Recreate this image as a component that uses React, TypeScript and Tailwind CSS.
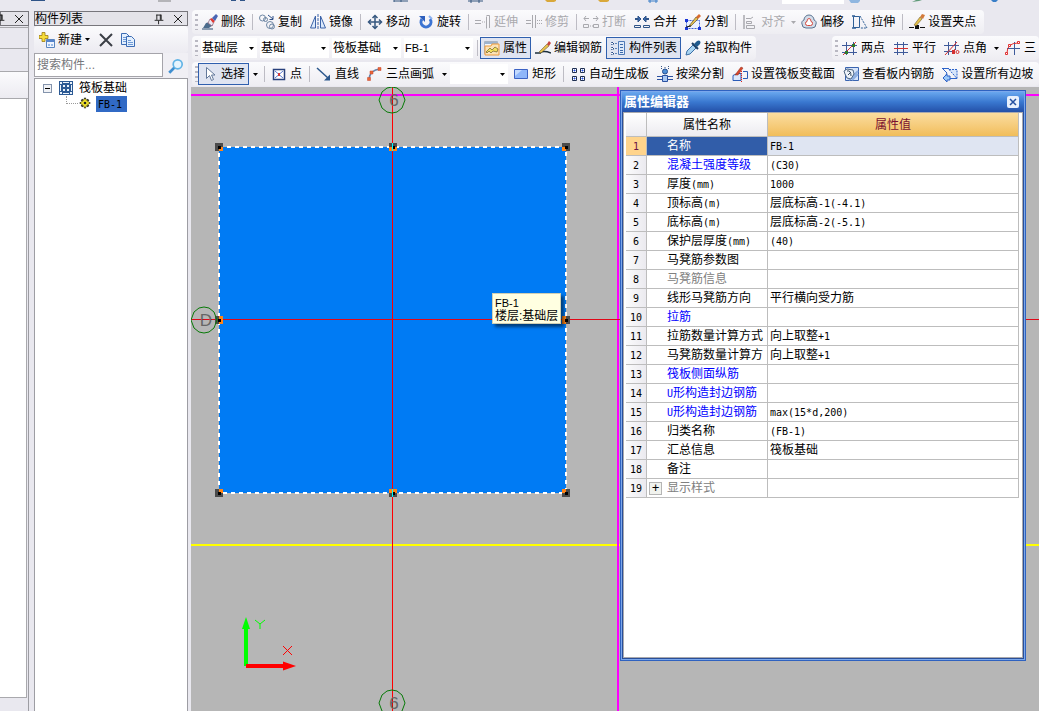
import type { ReactNode } from 'react';
import clsx from 'clsx';

const DRAWINGS = {
	erase: (
		<>
			<path d="M1 14h6l4-3-3-3-4 1z" fill="#4c6b8c" />
			<path d="M0 15h11" stroke="#27486e" />
			<path d="M6 9l2-4 4 3-2 4z" fill="#e8e8f4" stroke="#8a5a70" strokeWidth=".7" />
			<path d="M8 5l2-1 3 3-2 2z" fill="#e03a34" />
			<path d="M10 4l4-4 2 2-3 5z" fill="#4a66b4" />
		</>
	),
	copy: (
		<g fill="none" stroke="#6d86a3">
			<circle cx="3.5" cy="4" r="3" />
			<circle cx="6.5" cy="5.5" r="2" />
			<circle cx="11" cy="11" r="3.5" />
			<circle cx="13" cy="12.500" r="2.500" />
			<path d="M9 1l5 4M14 2v3.500h-3.500" stroke="#2c4f88" />
		</g>
	),
	mirror: (
		<g fill="#dce9fb" stroke="#3c63a8">
			<path d="M5.500 2v12h-5z" />
			<path d="M10.500 2v12h5z" />
			<path d="M8 0v16" strokeDasharray="3 1" />
		</g>
	),
	move: (
		<g fill="none" stroke="#35577f" strokeWidth="1.500">
			<path d="M8 2v12M2 8h12" />
			<path d="M5.500 4L8 1.500 10.500 4M5.500 12L8 14.500 10.500 12M4 5.500L1.500 8 4 10.500M12 5.500L14.500 8 12 10.500" />
		</g>
	),
	rotate: (
		<>
			<path d="M4 5a5 5 0 1 0 8 0" fill="none" stroke="#3c74d2" strokeWidth="3" />
			<path d="M1 2h6v6z" fill="#2d5fbd" />
			<path d="M11 2l3 3" stroke="#8cb2f0" strokeWidth="2" />
		</>
	),
	extend: (
		<g fill="none" stroke="#a9a9ae">
			<path d="M0 6.500h6M0 9.500h6" />
			<path d="M7 8h4" strokeDasharray="1 1" />
			<path d="M11.500 2.500v12M14.500 14V1.500h-3" />
		</g>
	),
	trim: (
		<g fill="none" stroke="#a9a9ae">
			<path d="M0 6.500h5M0 9.500h5" />
			<path d="M6.500 1v13M9.500 1v13" />
			<path d="M11 6.500h5M11 9.500h5" strokeDasharray="1 1" />
		</g>
	),
	breakAt: (
		<g fill="none" stroke="#a9a9ae">
			<path d="M1 4.500h5M10 4.500h5M3 2L1 4.500 3 7M13 2l2 2.500L13 7" />
			<path d="M.5 10.500h5v3h-5zM10.500 10.500h5v3h-5z" />
			<path d="M7 12h3" strokeDasharray="1 1" />
		</g>
	),
	merge: (
		<g fill="none" stroke="#2f5488">
			<path d="M1 5h5M10 5h5" strokeWidth="2" />
			<path d="M4 2l3 3-3 3zM12 2L9 5l3 3z" fill="#3d6bb0" />
			<path d="M.5 11.500h6v2h-6zM9.500 11.500h6v2h-6z" />
		</g>
	),
	split: (
		<>
			<path d="M1.500 6.500h13v8h-13z" fill="#eaf1ff" stroke="#3b5fd0" strokeDasharray="2 1" />
			<path d="M0 5h3v3H0zM0 13h3v3H0zM13 13h3v3h-3z" fill="#1a36d8" />
			<path d="M4 12L11 3l2 2-7 7z" fill="#e2c04e" stroke="#4a3c28" strokeWidth=".6" />
			<path d="M11 3l3-3 2 2-3 3z" fill="#d86b2c" />
			<path d="M1 13l5-1" stroke="#111" />
		</>
	),
	align: (
		<g fill="none" stroke="#a9a9ae">
			<path d="M2 1v14" strokeWidth="1.500" />
			<path d="M4 4.500h4M4.500 7.500h5v2h-5zM4.500 11.500h8v3h-8z" />
			<path d="M8 5l3-2" />
		</g>
	),
	offset: (
		<>
			<path d="M1 10a3 3 0 0 1 2-4 5 5 0 0 1 10 0 3 3 0 0 1 2 4q0 4-4 4H5q-4 0-4-4z" fill="#d4dde9" stroke="#5b7592" />
			<path d="M4.500 9.500q0-2 1.500-2 0-3 2-3t2 3q1.500 0 1.500 2 0 2-2 2h-3q-2 0-2-2z" fill="#fff" stroke="#d34a40" />
		</>
	),
	stretch: (
		<g fill="none" stroke="#2f5f96">
			<path d="M1.500 2.500h6v11h-6z" />
			<path d="M8 2l7 12H8" strokeDasharray="2 1" />
			<path d="M0 2h3M0 14h4" strokeWidth="1.500" />
		</g>
	),
	grip: (
		<>
			<path d="M0 13.500h5M11 13.500h5" stroke="#111" />
			<path d="M6 11h4v4H6z" fill="#111" />
			<path d="M5 11l6-8 2 2-6 7z" fill="#e4c04a" stroke="#5c4a24" strokeWidth=".5" />
			<path d="M11 3l2-3 3 1-2 4z" fill="#d37a3a" />
		</>
	),
	property: (
		<>
			<path d="M.5 1.500h13v12H.5z" fill="#f6f8fc" stroke="#a9b4c4" />
			<path d="M1 2h12v2H1z" fill="#9cb3cf" />
			<path d="M1 6h6l1-2h7v11H1z" fill="#fbe3b8" stroke="#ee9a3a" />
			<path d="M2 12l4-4 2 2 3-3 3 2-1 3-4-1-2 2-2-2-2 2z" fill="#f3e05a" stroke="#57481c" strokeWidth=".6" />
		</>
	),
	pencil: (
		<>
			<path d="M0 13h6M5 13q3-3 11 0" fill="none" stroke="#1c2f3c" strokeWidth="1.500" />
			<path d="M4 12l8-8 2 2-8 7z" fill="#e6c04c" stroke="#5c4a24" strokeWidth=".5" />
			<path d="M12 4l2-3 2 2-2 3z" fill="#c8453c" />
		</>
	),
	list: (
		<>
			<path d="M1.500 2.500h2v2h-2zM1.500 7.500h2v2h-2zM1.500 12.500h2v2h-2z" fill="#fff" stroke="#2a4f8a" strokeDasharray="1.500 1" />
			<path d="M5 3.500h2M5 8.500h2M5 13.500h2" stroke="#5d84b8" />
			<path d="M8.500 1.500h6v13h-6z" fill="#dfeafa" stroke="#4f7ab8" />
			<path d="M10 4.500h3M10 7.500h3M10 10.500h3M10 12.500h3" stroke="#3c69a8" />
		</>
	),
	dropper: (
		<>
			<path d="M1 15l1-4 6-6 3 3-6 6z" fill="#a9d4f2" stroke="#3a6ea5" />
			<path d="M7 3l6 6" stroke="#1c3f66" strokeWidth="2" />
			<path d="M9 4l3-3q2-1 3 0t0 3l-3 3z" fill="#1f5a8e" />
		</>
	),
	twoPoint: (
		<>
			<path d="M4.500 2v13M11.500 2v13M0 5.500h15M0 12.500h15" stroke="#3e5a9a" />
			<path d="M1 15L14 2" stroke="#d43030" />
			<path d="M3 11h3v3H3zM10 4h3v3h-3z" fill="#2f7a2a" />
		</>
	),
	parallel: (
		<>
			<path d="M4.500 2v13M10.500 2v13" stroke="#3e5a9a" />
			<path d="M1 4.500h14M1 12.500h14" stroke="#3e5a9a" />
			<path d="M1 8.500h14" stroke="#d43030" />
		</>
	),
	pointAngle: (
		<>
			<path d="M4.500 2v13M11.500 1v9M0 5.500h15M0 11.500h8" stroke="#3e5a9a" />
			<path d="M1 15L13 2M9 12l2-3" stroke="#d43030" />
			<circle cx="13.500" cy="12" r="1.500" fill="none" stroke="#d43030" />
			<path d="M8 10h3v4H8z" fill="#d43030" />
		</>
	),
	threePoint: (
		<>
			<path d="M9.500 2v13M2 8.500h13" stroke="#3e5a9a" />
			<path d="M2 13Q2 3 13 3" fill="none" stroke="#e03030" />
			<path d="M.5 12.500h2v2h-2zM3.500 4.500h2v2h-2zM12.500 1.500h2v2h-2z" fill="#fff" stroke="#e03030" />
		</>
	),
	cursor: <path d="M4.500 1.500v11l3-3 2 5 2-1-2-4.500h3.500z" fill="#fff" stroke="#62789a" />,
	point: (
		<>
			<path d="M2.500 3.500h11v10h-11z" fill="#fff" stroke="#28407c" strokeWidth="1.500" />
			<path d="M4 5l8 7M12 5l-8 7" stroke="#5c7ad0" />
			<path d="M7 7h2v3H7z" fill="#d23a3a" />
		</>
	),
	line: (
		<>
			<path d="M1 2l11 10" stroke="#2b578c" strokeWidth="1.500" />
			<path d="M14 14.500H8l6-6z" fill="#2b578c" />
		</>
	),
	arc: (
		<>
			<path d="M2 13Q3 4 13 3" fill="none" stroke="#6885ac" strokeWidth="1.500" />
			<path d="M.5 11.500h3v3h-3zM3 5h3v3H3zM11 1.500h3v3h-3z" fill="#e9673a" stroke="#c8452a" strokeWidth=".5" />
		</>
	),
	rect: (
		<>
			<path d="M1.500 3.500h13v9h-13z" fill="#8fb6fa" stroke="#3c62c4" />
			<path d="M2 4h7l-7 6z" fill="#c3dafe" />
		</>
	),
	autoSlab: (
		<g stroke="#1e2e50">
			<path d="M2.500 2.500h4v4h-4zM10.500 2.500h4v4h-4zM2.500 10.500h4v4h-4zM10.500 10.500h4v4h-4z" fill="#fff" />
			<path d="M4 4h1v1H4zM12 4h1v1h-1zM4 12h1v1H4zM12 12h1v1h-1z" fill="#2450e0" stroke="#2450e0" />
		</g>
	),
	beamSplit: (
		<>
			<path d="M4.500 0v3M11.500 0v3M8 1v2" stroke="#3a5686" strokeDasharray="1 1" />
			<circle cx="8" cy="5.500" r="2.500" fill="#4e8ed8" stroke="#244c8c" />
			<path d="M0 10.500h5M11 10.500h5M0 13.500h5M11 13.500h5" stroke="#2b50a0" />
			<path d="M5.500 9.500h5v6h-5z" fill="#a8c8f4" stroke="#2b50a0" />
		</>
	),
	section: (
		<>
			<path d="M1 14.500v-5l4-2h4v7z" fill="#dbe7fb" stroke="#2b5cb8" />
			<path d="M11 5.500h4.500v7H11" fill="none" stroke="#2b5cb8" />
			<path d="M9.500 5v11" stroke="#d22" strokeDasharray="1 1" />
			<path d="M3 9l6-8 2 1-5 7z" fill="#d9472c" stroke="#8c2c18" strokeWidth=".5" />
		</>
	),
	inspect: (
		<>
			<path d="M2.500 1.500h13v13h-13z" fill="#d6e4fa" stroke="#3a64b0" />
			<path d="M6 14L15 5M9 14l6-6" stroke="#8daee0" strokeWidth="2" />
			<path d="M1 5l3-2 6 1 1 4-3 5-4-1-2-4z" fill="#eef3fa" stroke="#4d6684" />
			<path d="M4 5q4-1 4 5M5 9l3-3" fill="none" stroke="#34495e" />
		</>
	),
	slope: (
		<g fill="none" stroke="#2c62c8">
			<path d="M7 3.500h8v9L7 3.500" fill="#d6e5fb" strokeDasharray="2 1" />
			<path d="M0 2.500h7M1 3l4 4-2 4M3 12.500h12" />
			<path d="M1 12l4-4v2h3v4H5v2z" fill="#9cc8f8" />
		</g>
	),
	create: (
		<>
			<path d="M7.500 7.500h8v8h-8z" fill="#eef5ff" stroke="#5a86c0" />
			<path d="M8 8h7v2H8z" fill="#5584cc" />
			<path d="M9 12h2v2H9zM12 12h2v2h-2z" fill="#9dbce8" />
			<path d="M3 .5h3v3h3v3H6v3H3v-3H0v-3h3z" fill="#f7dc3a" stroke="#9c7c14" strokeWidth=".8" />
		</>
	),
	duplicate: (
		<g fill="#e3effd" stroke="#3c6cb4">
			<path d="M1.500 1.500h5l3 3v8h-8z" />
			<path d="M6.500 4.500h5l3 3v7h-8z" />
			<path d="M3 5.500h3M3 7.500h3M3 9.500h3M8 8.500h3M8 10.500h5M8 12.500h5" stroke="#6f9bd8" />
		</g>
	),
	search: (
		<>
			<path d="M2 14l5-5" stroke="#3f8fd0" strokeWidth="2.500" />
			<circle cx="9.500" cy="6.500" r="4" fill="#e6f4fd" stroke="#62b4e6" strokeWidth="1.500" />
		</>
	),
	raft: (
		<>
			<path d="M1 1h14v14H1z" fill="#2c5a94" />
			<path d="M2 2h2v2H2zM5 2h6v1H5zM12 2h2v2h-2zM2 5h1v6H2zM13 5h1v6h-1zM2 12h2v2H2zM5 13h6v1H5zM12 12h2v2h-2zM5 5h2v2H5zM9 5h2v2H9zM5 9h2v2H5zM9 9h2v2H9z" fill="#eaf2fb" />
		</>
	),
	gear: (
		<>
			<path d="M8 2v12M2 8h12M4 4l8 8M12 4l-8 8" stroke="#222" strokeWidth="2.500" />
			<circle cx="8" cy="8" r="4" fill="#f4e62c" stroke="#4a4410" />
			<path d="M8 3v10M3 8h10" stroke="#f4e62c" strokeWidth="1.500" />
			<circle cx="8" cy="8" r="1.500" fill="#222" />
		</>
	),
	pin: <path d="M5.500 3v6M9.500 3v6M10.500 3v6M5 3.500h5M3 9.500h10M7.500 10v4" stroke="#111" fill="none" />,
	cross: <path d="M4 4l8 8M12 4l-8 8" stroke="#222" />,
	remove: <path d="M2 2l12 12M14 2L2 14" stroke="#3b3f46" strokeWidth="2" />
};

type IconName = keyof typeof DRAWINGS;

function Icon({ name, className = 'size-4' }: { name: IconName; className?: string }) {
	return (
		<svg viewBox="0 0 16 16" aria-hidden className={clsx('shrink-0', className)}>
			{DRAWINGS[name]}
		</svg>
	);
}

function Caret({ className }: { className?: string }) {
	return (
		<svg viewBox="0 0 5 3" aria-hidden className={clsx('h-[3px] w-[5px] shrink-0', className)}>
			<path d="M0 0h5L2.500 3z" fill="currentColor" />
		</svg>
	);
}

// Latin runs are set in half-width cells next to full-width Chinese characters
function Mixed({ text }: { text: string }) {
	return (
		<>
			{text.split(/([\x20-\x7e]+)/).map((part, index) =>
				index % 2 ? (
					<span key={index} className="font-['DejaVu_Sans_Mono',monospace] text-[10px]">
						{part}
					</span>
				) : (
					part
				)
			)}
		</>
	);
}

interface IToolProps {
	icon: IconName;
	label: string;
	active?: boolean;
	disabled?: boolean;
}

function Tool({ icon, label, active, disabled }: IToolProps) {
	return (
		<button
			type="button"
			disabled={disabled}
			className={clsx(
				'flex h-[22px] shrink-0 items-center gap-[3px] border px-[3px] whitespace-nowrap',
				active ? 'border-[#2f5fae] bg-[#dfe4f1]' : 'border-transparent',
				disabled && 'text-[#a9a9ad]'
			)}
		>
			<Icon name={icon} />
			{label}
		</button>
	);
}

function Menu({ label, disabled, className = 'w-3' }: { label: string; disabled?: boolean; className?: string }) {
	return (
		<button
			type="button"
			aria-label={label}
			disabled={disabled}
			className={clsx('flex h-5 shrink-0 items-center justify-center', disabled && 'text-[#a9a9ad]', className)}
		>
			<Caret />
		</button>
	);
}

function Separator() {
	return <span className="mr-0.5 ml-[3px] h-4 w-px shrink-0 bg-[#bdbcc4]" />;
}

function Combo({ label, value, className }: { label: string; value: string; className: string }) {
	return (
		<span className={clsx('grid h-5 shrink-0 items-center bg-white', className)}>
			<select aria-label={label} className="col-start-1 row-start-1 h-5 w-full appearance-none pl-px">
				<option>{value}</option>
			</select>
			<Caret className="pointer-events-none col-start-1 row-start-1 mr-[3px] justify-self-end" />
		</span>
	);
}

function Toolbar({ children, className }: { children: ReactNode; className?: string }) {
	return (
		<div
			className={clsx(
				'flex h-6 items-center rounded-sm bg-linear-to-b from-[#fbfbfd] to-[#eeedf2] pl-[3px]',
				className
			)}
		>
			<span className="h-4 w-[3px] shrink-0 bg-[repeating-linear-gradient(to_bottom,#b9b8c2_0_2px,transparent_2px_5px)]" />
			{children}
		</div>
	);
}

function Toolbars() {
	return (
		<div className="flex shrink-0 flex-col gap-0.5 overflow-hidden pb-px pl-px">
			<div className="flex">
				<Toolbar className="shrink-0 pr-1">
					<Tool icon="erase" label="删除" />
					<Separator />
					<Tool icon="copy" label="复制" />
					<Tool icon="mirror" label="镜像" />
					<Separator />
					<Tool icon="move" label="移动" />
					<Tool icon="rotate" label="旋转" />
					<Separator />
					<Tool icon="extend" label="延伸" disabled />
					<Tool icon="trim" label="修剪" disabled />
					<Separator />
					<Tool icon="breakAt" label="打断" disabled />
					<Tool icon="merge" label="合并" />
					<Tool icon="split" label="分割" />
					<Separator />
					<Tool icon="align" label="对齐" disabled />
					<Menu label="对齐选项" disabled className="w-2" />
					<Tool icon="offset" label="偏移" />
					<Tool icon="stretch" label="拉伸" />
					<Separator />
					<Tool icon="grip" label="设置夹点" />
				</Toolbar>
			</div>
			<div className="flex">
				<Toolbar className="shrink-0">
					<span className="mr-px ml-[3px] flex gap-[3px]">
						<Combo label="楼层" value="基础层" className="w-14" />
						<Combo label="构件类别" value="基础" className="w-[69px]" />
						<Combo label="构件类型" value="筏板基础" className="w-[69px]" />
						<Combo label="构件" value="FB-1" className="w-[69px] text-[11px]" />
					</span>
					<Separator />
					<Tool icon="property" label="属性" active />
					<Tool icon="pencil" label="编辑钢筋" />
					<Tool icon="list" label="构件列表" active />
					<Tool icon="dropper" label="拾取构件" />
				</Toolbar>
				<Toolbar className="ml-[76px] min-w-0 grow overflow-hidden">
					<Tool icon="twoPoint" label="两点" />
					<Tool icon="parallel" label="平行" />
					<Tool icon="pointAngle" label="点角" />
					<Menu label="点角选项" className="w-[10px]" />
					<Tool icon="threePoint" label="三" />
				</Toolbar>
			</div>
			<Toolbar>
				<Tool icon="cursor" label="选择" active />
				<Menu label="选择选项" />
				<Separator />
				<Tool icon="point" label="点" />
				<Separator />
				<Tool icon="line" label="直线" />
				<Tool icon="arc" label="三点画弧" />
				<Menu label="画弧选项" />
				<Combo label="画法" value="" className="mr-px w-[58px]" />
				<Tool icon="rect" label="矩形" />
				<Separator />
				<Tool icon="autoSlab" label="自动生成板" />
				<Tool icon="beamSplit" label="按梁分割" />
				<Tool icon="section" label="设置筏板变截面" />
				<Tool icon="inspect" label="查看板内钢筋" />
				<Tool icon="slope" label="设置所有边坡" />
			</Toolbar>
		</div>
	);
}

// Lower edges of the icons of the toolbar that is scrolled off the top
function CutOffToolbar() {
	return (
		<svg aria-hidden className="h-[11px] w-full shrink-0">
			<path d="M782 0h62v4h-62z" fill="#fff" />
			<path d="M31 0h14v1H31zM231 0h5v1h-5zM240 0h5v1h-5z" fill="#2f5488" />
			<path d="M158 0h13v2h-13z" fill="#b4b4b8" />
			<path d="M394 1h14M394 0v2M401 0v2M468 1h15M471 0v3M479 0v3" stroke="#35577f" />
			<path d="M545 0h11v1l-2 1h-7zM598 0h11v1l-2 1h-7z" fill="#d9a83a" />
			<path d="M648 1h10M650 0v3M656 0v3" stroke="#3a7fc8" />
			<path d="M849 0h11v1l-2 2h-7z" fill="#8fb6e0" />
			<path d="M912 2l4-2h6l-3 1z" fill="#5f9a78" />
			<path d="M991 0h7l-2 2h-3z" fill="#3a7fc8" />
		</svg>
	);
}

function DockHeader({ title }: { title?: string }) {
	return (
		<div className="flex h-[15px] shrink-0 items-center justify-end border border-[#77767c] bg-[#e4e3e9]">
			{title && <h2 className="mr-auto whitespace-nowrap">{title}</h2>}
			<button type="button" aria-label="固定" className="mr-1 shrink-0">
				<Icon name="pin" className="size-[14px]" />
			</button>
			<button type="button" aria-label="关闭" className="mr-px shrink-0">
				<Icon name="cross" className="size-4" />
			</button>
		</div>
	);
}

function ComponentList() {
	return (
		<aside className="flex w-[154px] shrink-0 flex-col">
			<DockHeader title="构件列表" />
			<div className="flex h-[27px] shrink-0 items-center rounded-sm bg-linear-to-b from-[#fbfbfd] to-[#ecebf1] pl-[5px]">
				<button type="button" className="flex items-center gap-[3px]">
					<Icon name="create" />
					新建
					<Caret />
				</button>
				<button type="button" aria-label="删除" className="ml-2">
					<Icon name="remove" />
				</button>
				<button type="button" aria-label="复制" className="ml-1.5">
					<Icon name="duplicate" />
				</button>
			</div>
			<div className="flex h-[25px] shrink-0 bg-[#f0eff4]">
				<input
					type="text"
					aria-label="搜索构件"
					placeholder="搜索构件..."
					className="h-6 w-[129px] border border-[#a5a4aa] bg-white px-0.5 placeholder:text-[#77777b]"
				/>
				<button type="button" aria-label="搜索" className="flex grow items-center justify-center">
					<Icon name="search" className="size-[18px]" />
				</button>
			</div>
			<ul className="grow border border-b-0 border-[#9d9da3] bg-white pt-px pl-2">
				<li>
					<div className="flex h-4 items-center">
						<button
							type="button"
							aria-label="折叠"
							className="flex size-[9px] items-center justify-center border border-[#8494ac] bg-[#f0f2f6]"
						>
							<span className="h-px w-[5px] bg-black" />
						</button>
						<Icon name="raft" className="ml-1.5 size-4" />
						<span className="ml-[5px]">筏板基础</span>
					</div>
					<ul className="pl-[23px]">
						<li className="flex h-4 items-start">
							<span className="h-2 w-3 shrink-0 border-b border-l border-dotted border-[#9a9a9a]" />
							<Icon name="gear" className="size-[14px]" />
							<span className="ml-1 h-4 w-[31px] bg-[#316ac5] pl-0.5 leading-4">
								<Mixed text="FB-1" />
							</span>
						</li>
					</ul>
				</li>
			</ul>
		</aside>
	);
}

function AxisBubble({ x, y, label }: { x: number; y: number; label: string }) {
	return (
		<>
			<path
				d="M0-13L5-12 10-8 13 0 10 8 5 12 0 13-5 12-10 8-13 0-10-8-5-12z"
				transform={`translate(${x} ${y})`}
				fill="none"
				stroke="#087a08"
			/>
			<text x={x + 2} y={y + 6} textAnchor="middle" fill="#666" className="font-['Liberation_Sans',sans-serif] text-[17px]">
				{label}
			</text>
		</>
	);
}

// Slab corners and edge midpoints, dx/dy pointing to the inside
const HANDLES = [
	{ x: 28, y: 60, dx: 1, dy: 1 },
	{ x: 202, y: 60, dx: 0, dy: 1 },
	{ x: 375, y: 60, dx: -1, dy: 1 },
	{ x: 28, y: 233, dx: 1, dy: 0 },
	{ x: 375, y: 233, dx: -1, dy: 0 },
	{ x: 28, y: 406, dx: 1, dy: -1 },
	{ x: 202, y: 406, dx: 0, dy: -1 },
	{ x: 375, y: 406, dx: -1, dy: -1 }
];

function Drawing() {
	return (
		<svg role="img" aria-label="筏板平面图" className="absolute inset-0 size-full">
			<rect x="28" y="60" width="347" height="346" fill="#007bf4" />
			<path d="M0 458h848" stroke="#ff0" strokeWidth="2" />
			<path d="M0 8h848M427 0v624" stroke="#f0f" strokeWidth="2" />
			<path d="M0 232.500h848" stroke="#e00818" />
			<path d="M201.500 0v624" stroke="#f00" />
			<rect x="28" y="60" width="347" height="346" fill="none" stroke="#fff" strokeWidth="2" strokeDasharray="4 4" />
			{HANDLES.map(({ x, y, dx, dy }) => (
				<g key={`${x}-${y}`} transform={`translate(${x} ${y})`}>
					<rect x="-4" y="-4" width="8" height="8" fill="#4b4b4b" />
					<rect x={dx < 0 ? -4 : 0} y={dy < 0 ? -4 : 0} width="4" height="4" fill="#ff8416" />
					{dx === 0 && <rect x="-4" y={dy < 0 ? -4 : 0} width="8" height="4" fill="#ff8416" />}
					{dy === 0 && <rect x={dx < 0 ? -4 : 0} y="-4" width="4" height="8" fill="#ff8416" />}
					<rect x="-1" y="-1" width="3" height="3" fill="#000" />
					{dx === 0 && <path d="M-.5-4v8" stroke="#0ff" />}
				</g>
			))}
			<AxisBubble x={201} y={13} label="6" />
			<AxisBubble x={13} y={233} label="D" />
			<AxisBubble x={201} y={616} label="6" />
			<path d="M55 579v-42" stroke="#0f0" strokeWidth="4" />
			<path d="M51 542l4-12 4 12z" fill="#0f0" />
			<path d="M55 579h40" stroke="#f00" strokeWidth="4" />
			<path d="M92 574.500l13 4.500-13 4.500z" fill="#f00" />
			<path d="M64 533l5 4 5-4M69 537v5" fill="none" stroke="#0f0" />
			<path d="M92 559l9 9M101 559l-9 9" stroke="#f00" />
		</svg>
	);
}

interface IProperty {
	name: string;
	value?: string;
	tone?: 'link' | 'muted';
	expandable?: boolean;
}

const PROPERTIES: IProperty[] = [
	{ name: '名称', value: 'FB-1' },
	{ name: '混凝土强度等级', value: '(C30)', tone: 'link' },
	{ name: '厚度(mm)', value: '1000' },
	{ name: '顶标高(m)', value: '层底标高-1(-4.1)' },
	{ name: '底标高(m)', value: '层底标高-2(-5.1)' },
	{ name: '保护层厚度(mm)', value: '(40)' },
	{ name: '马凳筋参数图' },
	{ name: '马凳筋信息', tone: 'muted' },
	{ name: '线形马凳筋方向', value: '平行横向受力筋' },
	{ name: '拉筋', tone: 'link' },
	{ name: '拉筋数量计算方式', value: '向上取整+1' },
	{ name: '马凳筋数量计算方', value: '向上取整+1' },
	{ name: '筏板侧面纵筋', tone: 'link' },
	{ name: 'U形构造封边钢筋', tone: 'link' },
	{ name: 'U形构造封边钢筋', value: 'max(15*d,200)', tone: 'link' },
	{ name: '归类名称', value: '(FB-1)' },
	{ name: '汇总信息', value: '筏板基础' },
	{ name: '备注' },
	{ name: '显示样式', tone: 'muted', expandable: true }
];

function PropertyRow({ property, index }: { property: IProperty; index: number }) {
	const selected = index === 0;
	const { name, value, tone, expandable } = property;
	return (
		<tr className="h-[19px]">
			<th
				scope="row"
				className={clsx(
					'border-r border-b border-[#bdbdbd] p-0 font-normal',
					selected ? 'bg-[#ffd48c] text-[#6a1545]' : 'bg-linear-to-r from-[#fbfbfc] to-[#ebeaef]'
				)}
			>
				<Mixed text={String(index + 1)} />
			</th>
			<td
				className={clsx(
					'border-r border-b border-[#bdbdbd] p-0',
					selected && 'bg-[#315da9] text-white',
					tone === 'link' && 'text-[#00f]',
					tone === 'muted' && 'text-[#808080]'
				)}
			>
				<div className="flex h-[18px] items-center overflow-hidden whitespace-nowrap">
					<span className="flex w-5 shrink-0 pl-0.5">
						{expandable && (
							<button
								type="button"
								aria-label="展开"
								className="flex size-[13px] items-center justify-center border border-[#b5b5b5] bg-[#f1f3ee] font-['DejaVu_Sans_Mono',monospace] text-xs leading-none text-black"
							>
								+
							</button>
						)}
					</span>
					<span>
						<Mixed text={name} />
					</span>
				</div>
			</td>
			<td className={clsx('border-r border-b border-[#bdbdbd] p-0 pl-0.5', selected && 'bg-[#dfe5f2]')}>
				{value && <Mixed text={value} />}
			</td>
		</tr>
	);
}

function PropertyEditor() {
	return (
		<section className="absolute top-[3px] left-[429px] flex h-[571px] w-[406px] flex-col border border-[#2f62c0] bg-[#6795e0] p-px shadow-[inset_0_0_0_1px_#7ba8ec]">
			<header className="flex h-5 shrink-0 items-center justify-between bg-linear-to-b from-[#69a7ee] via-[#3a78d0] to-[#2450a8] px-0.5 text-white">
				<h2 className="text-[13px] font-bold">属性编辑器</h2>
				<button
					type="button"
					aria-label="关闭"
					className="mr-[3px] flex size-3 items-center justify-center rounded-xs bg-[#e8f0fc]"
				>
					<svg viewBox="0 0 8 8" className="size-2">
						<path d="M1 1l6 6M7 1L1 7" stroke="#2450a0" strokeWidth="1.500" />
					</svg>
				</button>
			</header>
			<div className="min-h-0 grow border border-t-0 border-[#2a4f98] bg-white">
				<div className="h-full border border-[#a9a9ad] pr-[3px] pl-0.5">
					<table className="w-full table-fixed border-separate border-spacing-0 leading-[14px]">
						<colgroup>
							<col className="w-[21px]" />
							<col className="w-[121px]" />
							<col />
						</colgroup>
						<thead>
							<tr className="h-6">
								<td className="border-r border-b border-[#bdbdbd] bg-linear-to-b from-white to-[#ecebf0] p-0" />
								<th className="border-r border-b border-[#bdbdbd] bg-linear-to-b from-white to-[#ecebf0] p-0 font-normal">
									属性名称
								</th>
								<th className="border-r border-b border-[#bdbdbd] bg-linear-to-b from-[#fbdd9f] to-[#f1bd59] p-0 font-normal text-[#7a1030]">
									属性值
								</th>
							</tr>
						</thead>
						<tbody>
							{PROPERTIES.map((property, index) => (
								<PropertyRow key={index} property={property} index={index} />
							))}
						</tbody>
					</table>
				</div>
			</div>
		</section>
	);
}

export default function App() {
	return (
		<div className="flex h-screen w-full flex-col overflow-hidden bg-[#e9e8ef] font-['Liberation_Sans','Noto_Sans_CJK_SC',sans-serif] text-xs leading-[14px] text-black">
			<CutOffToolbar />
			<div className="-mt-px flex min-h-0 grow">
				<aside className="mr-[5px] flex w-[29px] shrink-0 flex-col overflow-hidden pt-px">
					<DockHeader />
					<div className="flex grow flex-col border-r border-[#9d9da3]">
						<div className="mt-px h-[22px] border-t border-b border-[#a9a9ad]" />
						<div className="h-[23px] border-b border-[#a9a9ad]" />
						<div className="h-[27px] border-b border-[#a9a9ad] bg-linear-to-b from-[#fbfbfd] to-[#ecebf1]" />
						<div className="mr-px grow border-r border-b border-[#a9a9ad] bg-white" />
						<div className="h-[13px]" />
					</div>
				</aside>
				<div className="flex pt-px">
					<ComponentList />
				</div>
				<main className="ml-[3px] flex min-w-0 grow flex-col">
					<Toolbars />
					<div className="relative min-h-0 grow overflow-hidden bg-[#b6b6b6]">
						<Drawing />
						<div className="absolute top-[206px] left-[301px] border border-[#cfcfb4] bg-[#ffffe1] px-0.5 pt-[3px] leading-[13px] shadow-[3px_3px_3px_rgba(0,0,0,0.5)]">
							<p className="text-[11px]">FB-1</p>
							<p>楼层:基础层</p>
						</div>
						<PropertyEditor />
					</div>
				</main>
			</div>
		</div>
	);
}
